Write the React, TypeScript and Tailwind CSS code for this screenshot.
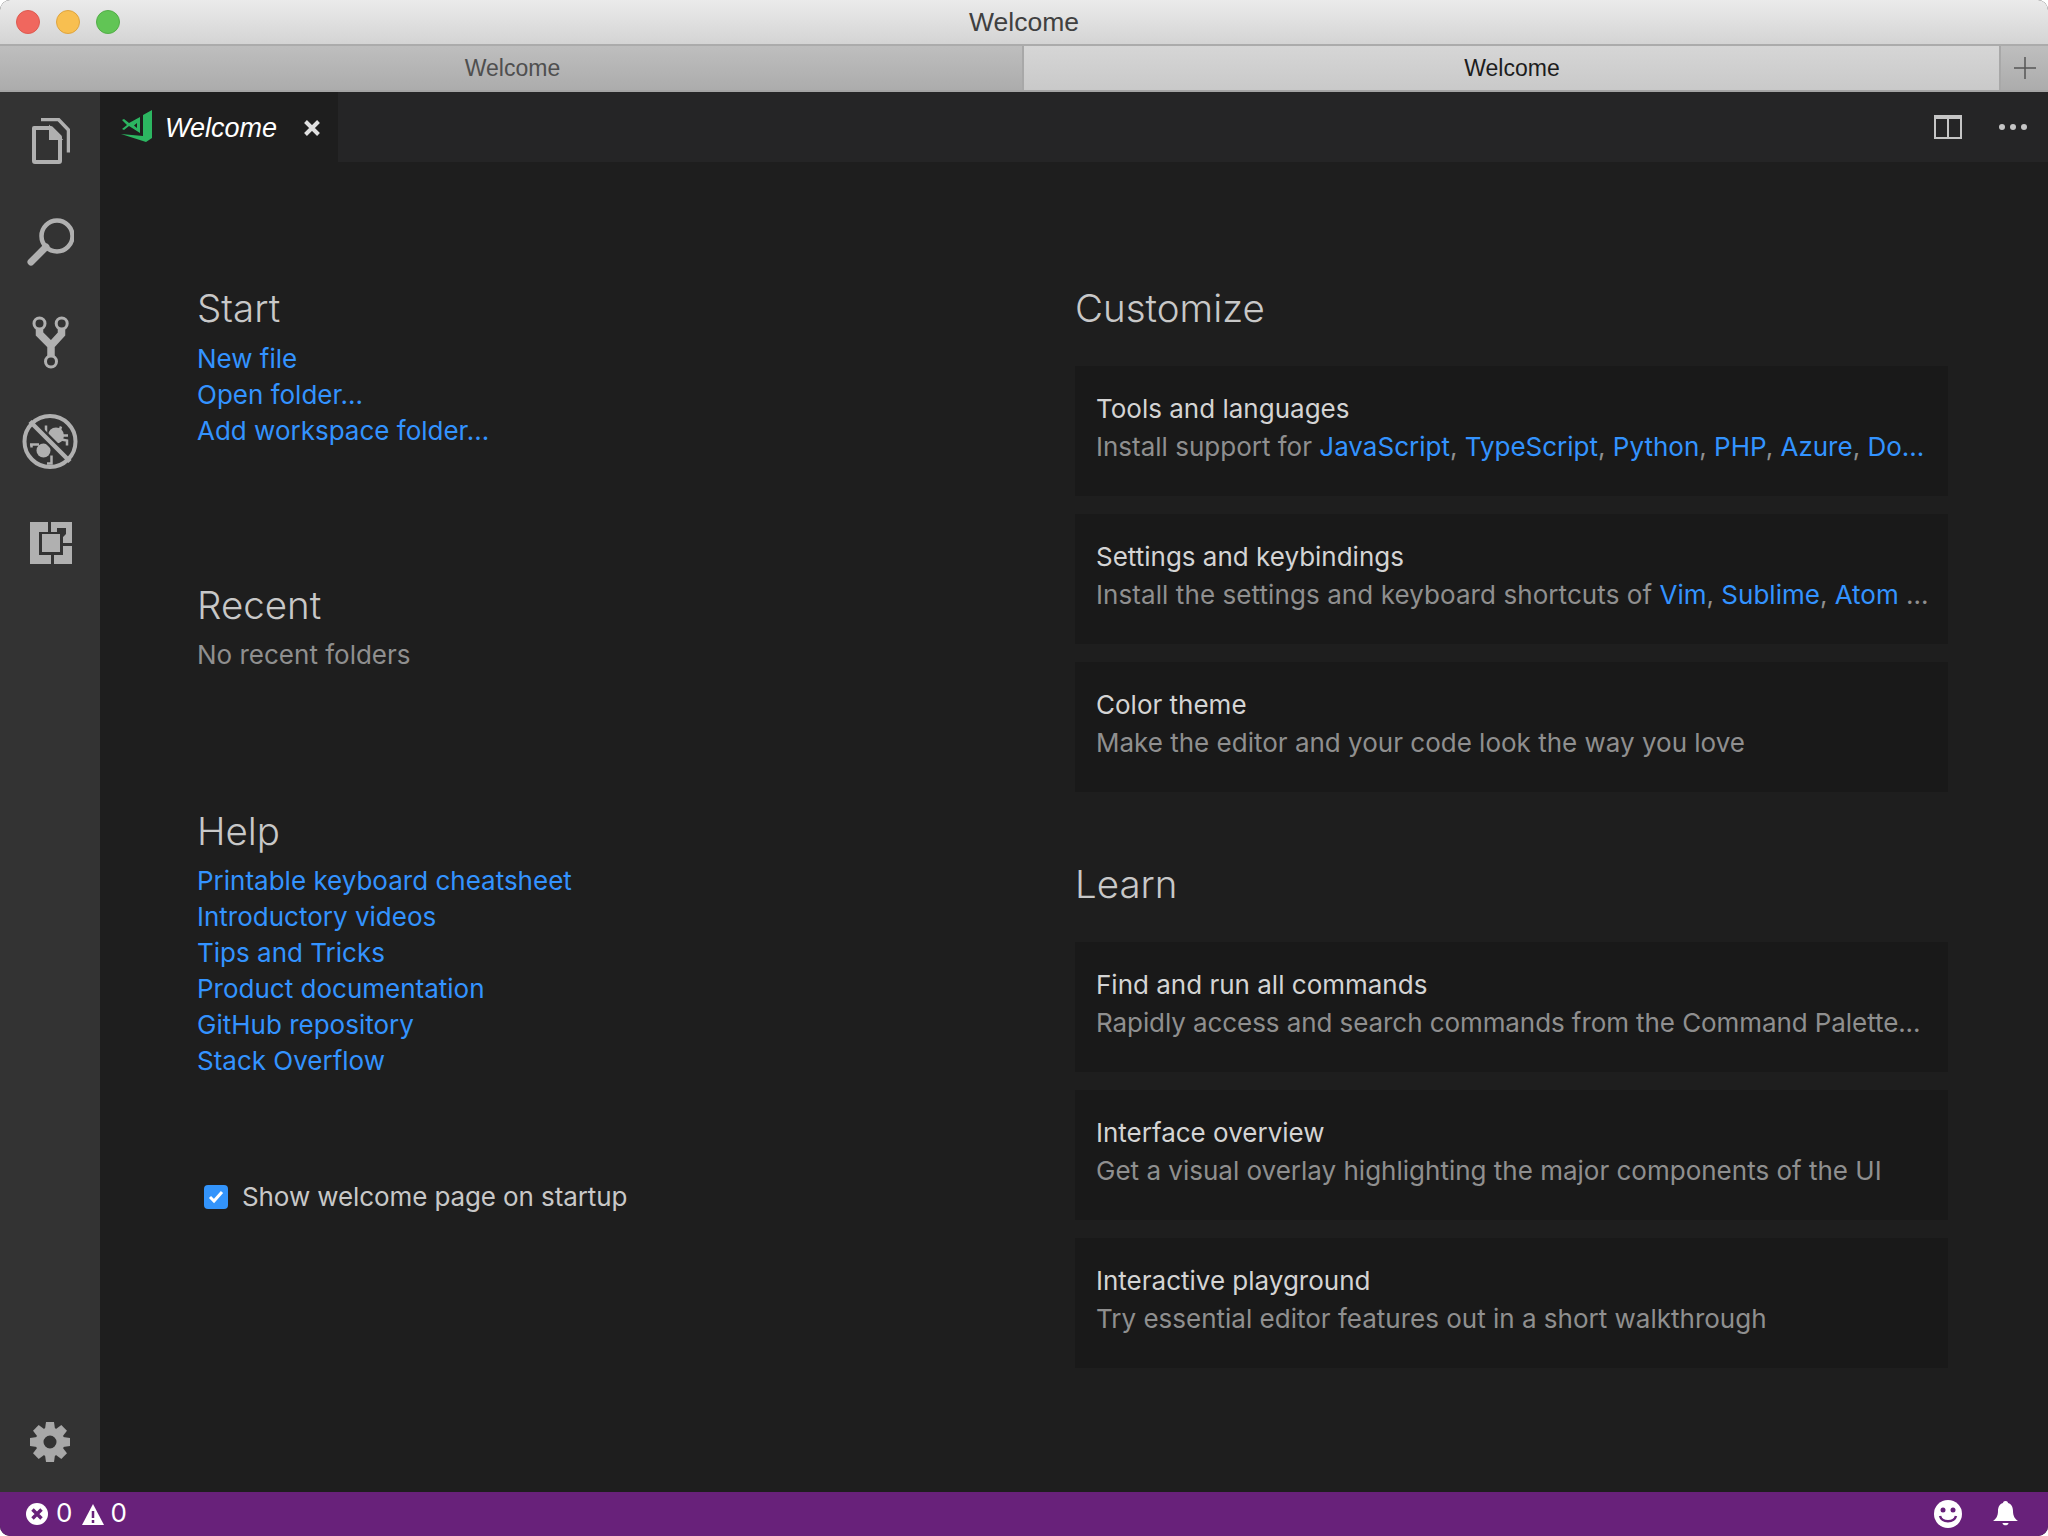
const link = "text-[#3393ff]";

function FilesIcon() {
  return (
    <svg width="40" height="48" viewBox="30 118 40 48" fill="none" stroke="#b0b0b0">
      <path d="M34 128h17l9 9v24a1 1 0 0 1-1 1H35a1 1 0 0 1-1-1z" strokeWidth="4" strokeLinejoin="round" />
      <path d="M50 127v12h11z" fill="#b0b0b0" strokeWidth="2" />
      <path d="M41 119.500h17.500l10 10.500v22.500" strokeWidth="3.500" />
    </svg>
  );
}

function SearchIcon() {
  return (
    <svg width="48" height="50" viewBox="25 216 48 50" fill="none" stroke="#b0b0b0">
      <circle cx="56" cy="235" r="15.500" strokeWidth="4.500" />
      <path d="M45 246l-15 15" strokeWidth="7" strokeLinecap="round" />
    </svg>
  );
}

function GitIcon() {
  return (
    <svg width="40" height="54" viewBox="30 315 40 54" fill="none" stroke="#b0b0b0">
      <circle cx="39.500" cy="323.500" r="5.500" strokeWidth="3" />
      <circle cx="61.700" cy="323.500" r="5.500" strokeWidth="3" />
      <circle cx="51" cy="361.500" r="5.500" strokeWidth="3" />
      <path d="M39.500 329v5l11.500 11.500 10.500-11.500v-5M51 344v12" strokeWidth="7.500" />
    </svg>
  );
}

function DebugIcon() {
  return (
    <svg width="58" height="58" viewBox="21 411.500 58 58" fill="none">
      <circle cx="56" cy="434" r="8" fill="#b0b0b0" />
      <circle cx="43.500" cy="449" r="7" fill="#b0b0b0" />
      <g stroke="#b0b0b0" strokeWidth="2.500">
        <path d="M46 424v9M61 425l-2 6M68 434h-8M67 444v-5l-6-1" />
        <path d="M30 443h9M31.500 442v4M47 462h4.500v-8" />
      </g>
      <path d="M31 421l38 38" stroke="#333333" strokeWidth="9" />
      <path d="M30 420l40 40" stroke="#b0b0b0" strokeWidth="4.500" />
      <circle cx="50" cy="440" r="25.500" stroke="#b0b0b0" strokeWidth="4" />
    </svg>
  );
}

function ExtensionsIcon() {
  return (
    <svg width="44" height="44" viewBox="28 520 44 44" fill="#b0b0b0">
      <path d="M30 522h18v10h-9v23h12v9H30z" />
      <path d="M51 522h21v21h-9v-6l3-3v-6h-9v4h-6z" />
      <path d="M54 564v-9h9v-9h9v18z" />
      <rect x="42" y="534" width="18" height="18" />
    </svg>
  );
}

function GearIcon() {
  const teeth = [0, 45, 90, 135, 180, 225, 270, 315];
  return (
    <svg width="40" height="40" viewBox="0 0 40 40" fill="#a8a8a8">
      <circle cx="20" cy="20" r="10.500" fill="none" stroke="#a8a8a8" strokeWidth="8" />
      {teeth.map((a) => (
        <polygon key={a} points="16,0 24,0 25,7 15,7" transform={`rotate(${a} 20 20)`} />
      ))}
    </svg>
  );
}

function VsCodeLogo() {
  return (
    <svg width="32" height="32" viewBox="0 0 32 32" fill="#2cb661" className="-mt-[2px] block">
      <path d="M31 0v28l-6 4L0 24l22 2V5z" />
      <path fillRule="evenodd" d="M19 7v16L8 16l-5 4-2-1 5-4-5-5 2-1 5 4zM13 15.500l3 2.500v-5z" />
    </svg>
  );
}

function Card({ title, children }: { title: string; children: React.ReactNode }) {
  return (
    <div className="flex h-[130px] flex-col justify-center bg-[#191919] pr-[12px] pb-[6px] pl-[21px] text-[26px] leading-[38px]">
      <div className="text-[#d4d4d4]">{title}</div>
      <div className="whitespace-nowrap text-[#8f8f8f]">{children}</div>
    </div>
  );
}

function Links({ items }: { items: string[] }) {
  return (
    <div className={`flex flex-col text-[26px] leading-[36px] ${link}`}>
      {items.map((item) => (
        <span key={item}>{item}</span>
      ))}
    </div>
  );
}

function Heading({ children }: { children: React.ReactNode }) {
  return <h2 className="text-[38.500px] leading-[44px] font-light text-[#c8c8c8]">{children}</h2>;
}

export default function App() {
  return (
    <div className="flex h-[1536px] w-[2048px] flex-col overflow-hidden rounded-[10px] bg-[#1e1e1e] font-['Inter',sans-serif]">
      {/* window chrome */}
      <div className="relative flex h-[46px] shrink-0 items-center justify-center border-b-2 border-[#ababab] bg-gradient-to-b from-[#ebebeb] to-[#d4d4d4] pt-[2px] font-['Liberation_Sans',sans-serif] text-[26.500px] text-[#404040]">
        <div className="absolute left-[16px] top-[10px] flex gap-[16px]">
          <span className="size-[24px] rounded-full border border-[#dd5a50] bg-[#f0675e]" />
          <span className="size-[24px] rounded-full border border-[#dea43f] bg-[#f8bf50]" />
          <span className="size-[24px] rounded-full border border-[#53ad48] bg-[#61c555]" />
        </div>
        Welcome
      </div>
      <div className="flex h-[46px] shrink-0 border-b-2 border-[#a4a4a4] font-['Liberation_Sans',sans-serif] text-[23px]">
        <div className="flex w-[1022px] items-center justify-center bg-gradient-to-b from-[#bebebe] to-[#acacac] pl-[3px] text-[#4f4f4f]">
          Welcome
        </div>
        <div className="flex flex-1 items-center justify-center border-x-2 border-[#a8a8a8] bg-gradient-to-b from-[#d6d6d6] to-[#c9c9c9] pl-[1px] text-[#1d1d1d]">
          Welcome
        </div>
        <div className="flex w-[47px] items-center justify-center bg-gradient-to-b from-[#bebebe] to-[#acacac]">
          <svg width="24" height="24" viewBox="0 0 24 24" stroke="#555555" strokeWidth="1.500">
            <path d="M12 1v22M1 12h22" />
          </svg>
        </div>
      </div>

      <div className="flex min-h-0 flex-1">
        {/* activity bar */}
        <aside className="flex w-[100px] shrink-0 flex-col items-center bg-[#333333] pb-[30px]">
          <div className="flex h-[100px] w-full items-center justify-center"><FilesIcon /></div>
          <div className="flex h-[100px] w-full items-center justify-center"><SearchIcon /></div>
          <div className="flex h-[100px] w-full items-center justify-center"><GitIcon /></div>
          <div className="flex h-[100px] w-full items-center justify-center"><DebugIcon /></div>
          <div className="flex h-[100px] w-full items-center justify-center"><ExtensionsIcon /></div>
          <div className="mt-auto"><GearIcon /></div>
        </aside>

        <main className="flex min-w-0 flex-1 flex-col">
          <div className="flex h-[70px] shrink-0 items-center bg-[#252526]">
            <div className="flex h-full w-[238px] items-center bg-[#1e1e1e] pl-[21px]">
              <VsCodeLogo />
              <span className="ml-[12px] mt-[2px] font-['Liberation_Sans',sans-serif] text-[27px] text-white italic">Welcome</span>
              <svg className="ml-[27px] mt-[2px]" width="16" height="16" viewBox="0 0 16 16" stroke="#e0e0e0" strokeWidth="4">
                <path d="M1.500 1.500l13 13M14.500 1.500l-13 13" />
              </svg>
            </div>
            <div className="ml-auto flex items-center gap-[37px] pr-[21px]">
              <svg width="28" height="24" viewBox="0 0 28 24" fill="none" stroke="#c5c5c5">
                <path d="M0 2h28" strokeWidth="4" />
                <path d="M1 1v22h26V1M14 1v22" strokeWidth="2" />
              </svg>
              <svg width="28" height="8" viewBox="0 0 28 8" fill="#c5c5c5">
                <circle cx="3" cy="4" r="3" />
                <circle cx="14" cy="4" r="3" />
                <circle cx="25" cy="4" r="3" />
              </svg>
            </div>
          </div>

          <div className="flex min-h-0 flex-1 pt-[124px] pr-[100px] pl-[97px]">
            <section className="flex w-[878px] shrink-0 flex-col">
              <Heading>Start</Heading>
              <div className="mt-[11px]">
                <Links items={["New file", "Open folder...", "Add workspace folder..."]} />
              </div>
              <div className="mt-[134px]"><Heading>Recent</Heading></div>
              <div className="mt-[10px] text-[26px] leading-[36px] text-[#8f8f8f]">No recent folders</div>
              <div className="mt-[136px]"><Heading>Help</Heading></div>
              <div className="mt-[10px]">
                <Links
                  items={[
                    "Printable keyboard cheatsheet",
                    "Introductory videos",
                    "Tips and Tricks",
                    "Product documentation",
                    "GitHub repository",
                    "Stack Overflow",
                  ]}
                />
              </div>
              <label className="mt-[100px] flex items-center gap-[14px] pl-[7px] text-[26px] leading-[36px] tracking-[-0.1px] text-[#c8c8c8]">
                <span className="flex size-[24px] items-center justify-center rounded-[4px] bg-[#3394fb]">
                  <svg width="16" height="14" viewBox="0 0 16 14" fill="none" stroke="white" strokeWidth="3">
                    <path d="M2 7l4 4 8-9" />
                  </svg>
                </span>
                Show welcome page on startup
              </label>
            </section>

            <section className="flex min-w-0 flex-1 flex-col">
              <Heading>Customize</Heading>
              <div className="mt-[36px] flex flex-col gap-[18px]">
                <Card title="Tools and languages">
                  Install support for <span className={link}>JavaScript</span>, <span className={link}>TypeScript</span>, <span className={link}>Python</span>, <span className={link}>PHP</span>, <span className={link}>Azure</span>, <span className={link}>Do...</span>
                </Card>
                <Card title="Settings and keybindings">
                  <span className="tracking-[0.08px]">Install the settings and keyboard shortcuts of</span> <span className={link}>Vim</span>, <span className={link}>Sublime</span>, <span className={link}>Atom</span> ...
                </Card>
                <Card title="Color theme">Make the editor and your code look the way you love</Card>
              </div>
              <div className="mt-[70px]"><Heading>Learn</Heading></div>
              <div className="mt-[36px] flex flex-col gap-[18px]">
                <Card title="Find and run all commands">
                  <span className="tracking-[-0.08px]">Rapidly access and search commands from the Command Palette...</span>
                </Card>
                <Card title="Interface overview">Get a visual overlay highlighting the major components of the UI</Card>
                <Card title="Interactive playground">Try essential editor features out in a short walkthrough</Card>
              </div>
            </section>
          </div>
        </main>
      </div>

      <footer className="flex h-[44px] shrink-0 items-center justify-between bg-[#68217a] pr-[30px] pl-[26px] text-[26px] text-white">
        <div className="flex items-center">
          <svg width="22" height="22" viewBox="0 0 22 22">
            <circle cx="11" cy="11" r="11" fill="white" />
            <path d="M6.500 6.500l9 9M15.500 6.500l-9 9" stroke="#68217a" strokeWidth="3.500" />
          </svg>
          <span className="ml-[8px] -mt-[3px]">0</span>
          <svg className="ml-[10px]" width="22" height="21" viewBox="0 0 22 21">
            <path d="M11 0l11 21H0z" fill="white" />
            <path d="M11 7v7M11 16v3" stroke="#68217a" strokeWidth="2.500" />
          </svg>
          <span className="ml-[6px] -mt-[3px]">0</span>
        </div>
        <div className="flex items-center gap-[31px]">
          <svg width="28" height="28" viewBox="0 0 28 28">
            <circle cx="14" cy="14" r="14" fill="white" />
            <circle cx="9" cy="10" r="2.500" fill="#68217a" />
            <circle cx="19" cy="10" r="2.500" fill="#68217a" />
            <path d="M6 16c2 7 14 7 16 0" fill="none" stroke="#68217a" strokeWidth="2.500" />
          </svg>
          <svg width="25" height="26" viewBox="0 0 25 26" fill="white">
            <path d="M12.500 0c2 0 2.500 1.500 2.500 2 4 1 5 5 5 8 0 5 2 8 5 10H0c3-2 5-5 5-10 0-3 1-7 5-8 0-.500.500-2 2.500-2z" />
            <path d="M9.500 22h6c0 3-6 3-6 0z" />
          </svg>
        </div>
      </footer>
    </div>
  );
}
